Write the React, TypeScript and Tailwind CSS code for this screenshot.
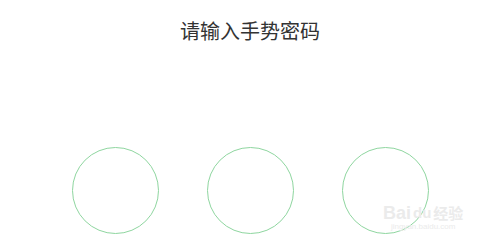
export default function App() {
  return (
    <div className="relative w-[500px] h-[248px] overflow-hidden bg-white font-['Noto_Sans_CJK_SC',sans-serif]">
      {/* Title */}
      <div className="pt-[19px] text-center text-[20px] leading-[24px] text-[#333333]">
        请输入手势密码
      </div>

      {/* Gesture circles */}
      <div className="mt-[104px] ml-[72px] flex gap-[48px]">
        <div className="w-[87px] h-[87px] rounded-full border border-[#8fd6a0]" />
        <div className="w-[87px] h-[87px] rounded-full border border-[#8fd6a0]" />
        <div className="w-[87px] h-[87px] rounded-full border border-[#8fd6a0]" />
      </div>

      {/* Watermark */}
      <div className="absolute left-[383px] top-[204px] flex flex-col items-center text-[#ebebeb]">
        <div className="flex items-end gap-[2px] text-[18px] leading-[18px] font-bold font-['Liberation_Sans',sans-serif]">
          <span>Bai</span>
          <span className="text-[15px]">du</span>
          <span className="text-[15px] font-['Noto_Sans_CJK_SC',sans-serif]">经验</span>
        </div>
        <div className="text-[8px] leading-[10px] font-['Liberation_Sans',sans-serif]">jingyan.baidu.com</div>
      </div>
    </div>
  )
}
